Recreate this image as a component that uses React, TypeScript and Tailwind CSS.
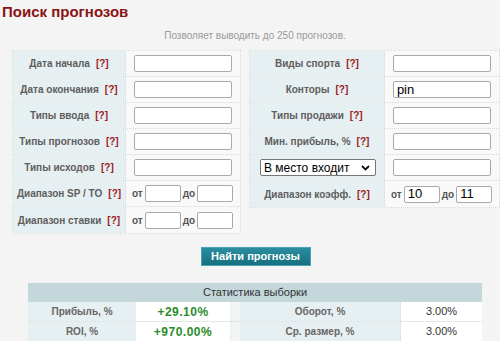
import React from 'react';

const Help = () => <span className="ml-[6px] text-[#9b1c1c]">[?]</span>;

const Label = ({ text, w }: { text: string; w: string }) => (
  <div className={`${w} h-full flex items-center justify-center whitespace-nowrap bg-[#e6eff1] border-r border-dotted border-[#d6dcdd] text-[10px] font-bold text-[#5e5e5e]`}>
    {text}
    <Help />
  </div>
);

const Field = ({ value = '' }: { value?: string }) => (
  <div className="w-[115px] h-full flex items-center pl-[8px]">
    <input
      readOnly
      value={value}
      className="w-[98px] h-[17px] bg-white border border-[#a9a9a9] rounded-[2px] px-[3px] text-[13px] text-black outline-none"
    />
  </div>
);

const Range = ({ a = '', b = '' }: { a?: string; b?: string }) => (
  <div className="w-[115px] h-full flex items-center pl-[6px] text-[10px] font-bold text-[#555]">
    <span>от</span>
    <input readOnly value={a} className="ml-[2px] w-[36px] h-[17px] bg-white border border-[#a9a9a9] rounded-[2px] px-[3px] text-[13px] font-normal text-black outline-none" />
    <span className="ml-[2px]">до</span>
    <input readOnly value={b} className="ml-[2px] w-[36px] h-[17px] bg-white border border-[#a9a9a9] rounded-[2px] px-[3px] text-[13px] font-normal text-black outline-none" />
  </div>
);

const Row = ({ children, last }: { children: React.ReactNode; last?: boolean }) => (
  <div className={`h-[26px] flex ${last ? '' : 'border-b border-dotted border-[#d6dcdd]'}`}>{children}</div>
);

export default function App() {
  return (
    <div className="w-[500px] h-[341px] overflow-hidden bg-[#f4f4f4]" style={{ fontFamily: '"Liberation Sans", Arial, sans-serif' }}>
      <h1 className="pl-[2px] pt-[2px] text-[15px] leading-[20px] font-bold text-[#8a1414]">Поиск прогнозов</h1>
      <p className="mt-[7px] pl-[10px] text-center text-[10px] leading-[14px] text-[#9a9a9a]">
        Позволяет выводить до 250 прогнозов.
      </p>

      <div className="mt-[7px] pl-[12px] flex gap-[8px] items-start">
        <div className="w-[229px] border border-dotted border-[#d6dcdd] bg-[#f9f9f9]">
          <Row><Label w="w-[114px]" text="Дата начала" /><Field /></Row>
          <Row><Label w="w-[114px]" text="Дата окончания" /><Field /></Row>
          <Row><Label w="w-[114px]" text="Типы ввода" /><Field /></Row>
          <Row><Label w="w-[114px]" text="Типы прогнозов" /><Field /></Row>
          <Row><Label w="w-[114px]" text="Типы исходов" /><Field /></Row>
          <Row><Label w="w-[114px]" text="Диапазон SP / TO" /><Range /></Row>
          <Row last><Label w="w-[114px]" text="Диапазон ставки" /><Range /></Row>
        </div>

        <div className="w-[251px] border border-dotted border-[#d6dcdd] bg-[#f9f9f9]">
          <Row><Label w="w-[136px]" text="Виды спорта" /><Field /></Row>
          <Row><Label w="w-[136px]" text="Конторы" /><Field value="pin" /></Row>
          <Row><Label w="w-[136px]" text="Типы продажи" /><Field /></Row>
          <Row><Label w="w-[136px]" text="Мин. прибыль, %" /><Field /></Row>
          <Row>
            <div className="w-[136px] h-full flex items-center pl-[10px] bg-[#e6eff1] border-r border-dotted border-[#d6dcdd]">
              <div className="w-[116px] h-[17px] flex items-center justify-between bg-white border border-[#767676] rounded-[2px] pl-[3px] pr-[5px] text-[12px] text-black">
                <span>В место входит</span>
                <svg width="9" height="6" viewBox="0 0 9 6"><path d="M1 1l3.5 3.5L8 1" fill="none" stroke="#111" strokeWidth="1.8" /></svg>
              </div>
            </div>
            <Field />
          </Row>
          <Row last><Label w="w-[136px]" text="Диапазон коэфф." /><Range a="10" b="11" /></Row>
        </div>
      </div>

      <div className="mt-[13px] pl-[11px] flex justify-center">
        <button className="w-[110px] h-[19px] bg-gradient-to-b from-[#2a8ea0] to-[#16707f] border border-[#4aa3b3] text-white text-[11px] font-bold leading-none">
          Найти прогнозы
        </button>
      </div>

      <div className="mt-[17px] ml-[28px] w-[454px]">
        <div className="h-[19px] flex items-center justify-center bg-[#c4d8db] text-[11px] text-[#333]">Статистика выборки</div>
        {[
          ['Прибыль, %', '+29.10%', 'Оборот, %', '3.00%'],
          ['ROI, %', '+970.00%', 'Ср. размер, %', '3.00%'],
        ].map((r) => (
          <div key={r[0]} className="h-[20px] flex border-b border-dotted border-[#d6dcdd]">
            <div className="w-[108px] flex items-center justify-center bg-[#e6eff1] text-[10px] font-bold text-[#666]">{r[0]}</div>
            <div className="w-[95px] flex items-center justify-center bg-white border-r border-dotted border-[#d6dcdd] text-[12px] font-bold tracking-[0.5px] text-[#2a8c2a]">{r[1]}</div>
            <div className="w-[9px] bg-[#f1f5f6]" />
            <div className="w-[161px] flex items-center justify-center bg-[#e6eff1] border-r border-dotted border-[#d6dcdd] text-[10px] font-bold text-[#666]">{r[2]}</div>
            <div className="w-[81px] flex items-center justify-center bg-white text-[11px] text-[#333]">{r[3]}</div>
          </div>
        ))}
      </div>
    </div>
  );
}
